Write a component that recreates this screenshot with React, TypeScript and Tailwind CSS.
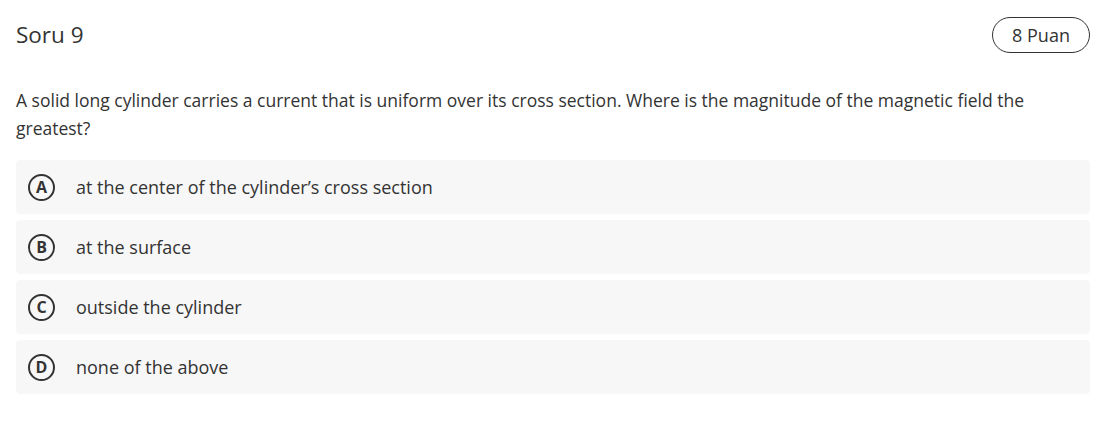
import React from 'react';

const options = [
  { key: 'A', text: 'at the center of the cylinder’s cross section' },
  { key: 'B', text: 'at the surface' },
  { key: 'C', text: 'outside the cylinder' },
  { key: 'D', text: 'none of the above' },
];

const App: React.FC = () => {
  return (
    <div className="min-h-screen bg-white text-[#333] pl-4 pr-[18px]" style={{ fontFamily: '"Open Sans", sans-serif' }}>
      <div className="flex items-center justify-between pt-[17px] h-[53px]">
        <h2 className="text-[22.5px] leading-none">Soru 9</h2>
        <span className="h-9 w-[98px] rounded-full border border-[#333] flex items-center justify-center text-[18px]">
          8 Puan
        </span>
      </div>

      <p className="mt-[33px] text-[17.5px] leading-[28px] pr-16">
        A solid long cylinder carries a current that is uniform over its cross section. Where is the magnitude of the magnetic field the greatest?
      </p>

      <div className="mt-[18px] flex flex-col gap-[6px]">
        {options.map((o) => (
          <div key={o.key} className="h-[54px] bg-[#f7f7f7] rounded-sm flex items-center pl-3 gap-[21px]">
            <div className="shrink-0 size-[27px] rounded-full border-2 border-[#333] grid place-items-center text-[16px] font-bold leading-none">
              {o.key}
            </div>
            <div className="text-[18px]">{o.text}</div>
          </div>
        ))}
      </div>
    </div>
  );
};

export default App;
